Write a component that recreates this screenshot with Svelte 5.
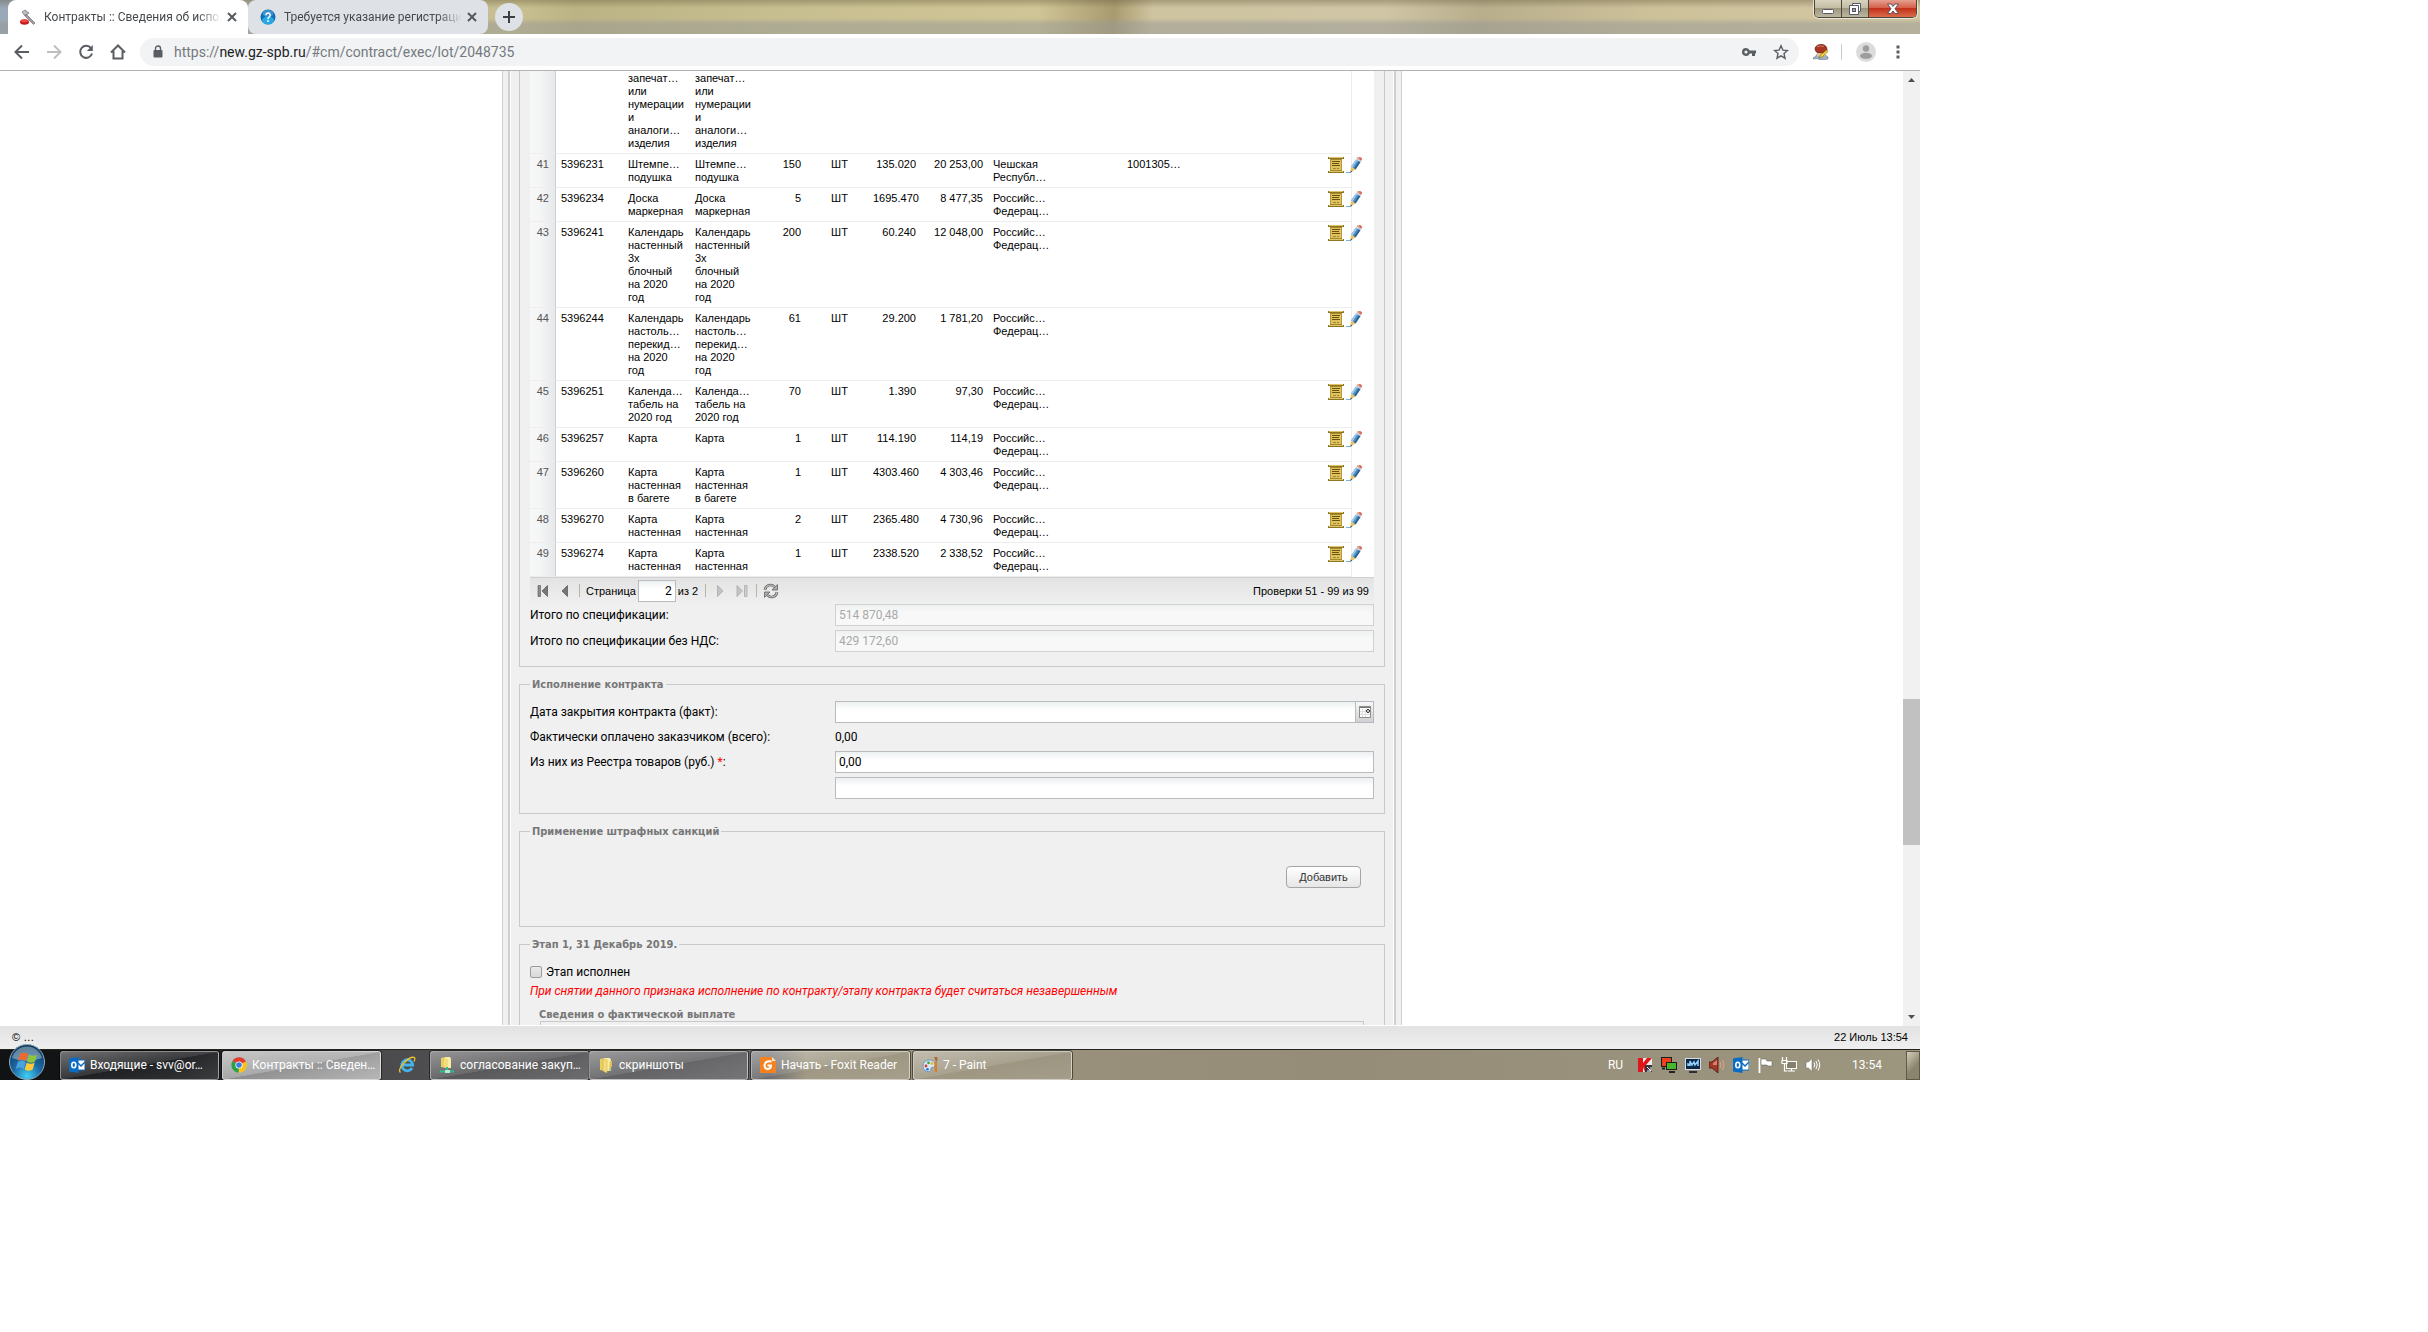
<script lang="ts">
  interface Item {
    no: number;
    id: string;
    name: string;
    qty: string;
    price: string;
    total: string;
    country: string;
    code?: string;
  }

  const russia = 'Российс…\nФедерац…';

  const items: Item[] = [
    { no: 41, id: '5396231', name: 'Штемпе…\nподушка', qty: '150', price: '135.020', total: '20 253,00', country: 'Чешская\nРеспубл…', code: '1001305…' },
    { no: 42, id: '5396234', name: 'Доска\nмаркерная', qty: '5', price: '1695.470', total: '8 477,35', country: russia },
    { no: 43, id: '5396241', name: 'Календарь\nнастенный\n3х\nблочный\nна 2020\nгод', qty: '200', price: '60.240', total: '12 048,00', country: russia },
    { no: 44, id: '5396244', name: 'Календарь\nнастоль…\nперекид…\nна 2020\nгод', qty: '61', price: '29.200', total: '1 781,20', country: russia },
    { no: 45, id: '5396251', name: 'Календа…\nтабель на\n2020 год', qty: '70', price: '1.390', total: '97,30', country: russia },
    { no: 46, id: '5396257', name: 'Карта', qty: '1', price: '114.190', total: '114,19', country: russia },
    { no: 47, id: '5396260', name: 'Карта\nнастенная\nв багете', qty: '1', price: '4303.460', total: '4 303,46', country: russia },
    { no: 48, id: '5396270', name: 'Карта\nнастенная', qty: '2', price: '2365.480', total: '4 730,96', country: russia },
    { no: 49, id: '5396274', name: 'Карта\nнастенная', qty: '1', price: '2338.520', total: '2 338,52', country: russia }
  ];

  const cutName = 'запечат…\nили\nнумерации\nи\nаналоги…\nизделия';

  let page = $state('2');
  let closeDate = $state('');
  let registrySum = $state('0,00');
  let registryNote = $state('');
  let stageDone = $state(false);
</script>

{#snippet outlook()}
  <svg width="16" height="16" viewBox="0 0 16 16">
    <rect x="8" y="3" width="8" height="10" fill="#fff" stroke="#0a6cc4" />
    <path d="M9 6l3 3 4-4" fill="none" stroke="#0a6cc4" stroke-width="1.5" />
    <path d="M0 1.500L9.500 0v16L0 14.500z" fill="#0a6cc4" />
    <ellipse cx="4.800" cy="8" rx="2" ry="2.800" fill="none" stroke="#fff" stroke-width="1.600" />
  </svg>
{/snippet}

{#snippet folder()}
  <svg width="16" height="16" viewBox="0 0 16 16">
    <path d="M2 2l5-1v13l-5-1z" fill="#e8cf62" />
    <path d="M6 1h6l1 2v11H6z" fill="#f8eda4" />
    <path d="M5 2l4 1v13l-4-2z" fill="#f3dc79" stroke="#d1ad3e" stroke-width=".5" />
    <path d="M12 4h2v10h-3z" fill="#e0bf50" />
    <path d="M13 10h1v4h-1z" fill="#3c9ad8" />
  </svg>
{/snippet}

{#snippet rowIcons()}
  <div class="row-icons">
    <button aria-label="Документ">
      <svg width="16" height="16" viewBox="0 0 16 16">
        <path d="M2 2h12v12H2z" fill="#b8983a" />
        <path d="M3 2h10v12H3z" fill="#dfc25c" />
        <path d="M4 4.500h8M4 6.500h7M4 8.500h8" stroke="#6b5410" />
        <path d="M5 11.500h3M9 11.500h2" stroke="#a08638" />
        <rect width="16" height="2" fill="#8f7722" />
        <path d="M1 .5h14" stroke="#dcc56e" />
        <path d="M2 2.500h12" stroke="#a58a2a" />
        <rect y="14" width="16" height="2" fill="#8f7722" />
        <path d="M1 14.500h14" stroke="#dcc56e" />
        <path d="M2 13.500h12" stroke="#a58a2a" />
      </svg>
    </button>
    <button aria-label="Редактировать">
      <svg width="16" height="16" viewBox="0 0 16 16">
        <path d="M0 15.500h5" stroke="#6ab6e6" />
        <path d="M10 2.500l4.500 2.500-5 7.500L5 9.500z" fill="#4f8fc4" />
        <path d="M10 2.500l1.500.8-5 7.500L5 9.500z" fill="#9cc9ea" />
        <path d="M13 4.200l1.500.8-5 7.500-1.300-.9z" fill="#2d5f8f" />
        <path d="M5 9.500l4.500 3L4.500 15.500z" fill="#e6c465" />
        <path d="M4.800 13.500l1.500 1-1.900 1.300z" fill="#3a4c5c" />
        <path d="M10 2.500L11.500.2l4 2.300-1 2.500z" fill="#c9d1d8" />
        <path d="M11 1L12 0h2l1.800 1v2l-.5.800z" fill="#d8675c" />
        <path d="M11 1L12 0h1l.5 2.200z" fill="#f0b488" />
      </svg>
    </button>
  </div>
{/snippet}

<div class="screen">
  <div class="desktop">
    <header>
      <div class="tabstrip">
        <div class="tab active">
          <svg width="16" height="16" viewBox="0 0 16 16">
            <path d="M2 3l3-2 4 3-4 3z" fill="#b9bcc0" stroke="#6f7275" stroke-width=".7" />
            <path d="M6 5l9 9-1.500 1.500L5 7z" fill="#9a9da1" stroke="#5f6265" stroke-width=".6" />
            <ellipse cx="4.500" cy="13" rx="4.500" ry="2.800" fill="#c51a1a" />
            <ellipse cx="4.500" cy="11.800" rx="3.500" ry="1.600" fill="#f04a42" />
          </svg>
          <span class="tab-title">Контракты :: Сведения об испол</span>
          <button class="close" aria-label="Закрыть вкладку">
            <svg width="10" height="10" viewBox="0 0 10 10"><path d="M1 1l8 8M9 1L1 9" stroke="#555a5f" stroke-width="2" /></svg>
          </button>
        </div>
        <div class="tab">
          <svg width="16" height="16" viewBox="0 0 16 16">
            <circle cx="8" cy="8" r="7.500" fill="#0d6fb8" />
            <ellipse cx="8" cy="11.500" rx="6" ry="4" fill="#27a9e6" />
            <ellipse cx="8" cy="4.500" rx="5.500" ry="3.500" fill="#5aa8dc" opacity=".6" />
            <path d="M5.800 6.200a2.200 2.200 0 1 1 3.300 1.900Q8 8.700 8 10" fill="none" stroke="#fff" stroke-width="1.500" />
            <circle cx="8" cy="12" r="1" fill="#fff" />
          </svg>
          <span class="tab-title">Требуется указание регистраци</span>
          <button class="close" aria-label="Закрыть вкладку">
            <svg width="10" height="10" viewBox="0 0 10 10"><path d="M1 1l8 8M9 1L1 9" stroke="#555a5f" stroke-width="2" /></svg>
          </button>
        </div>
        <button class="newtab" aria-label="Новая вкладка">
          <svg width="12" height="12" viewBox="0 0 12 12"><path d="M6 0v12M0 6h12" stroke="#3c4043" stroke-width="2" /></svg>
        </button>
        <div class="winbuttons">
          <button aria-label="Свернуть">
            <svg width="12" height="12" viewBox="0 0 12 12"><rect x=".5" y="6.500" width="11" height="4" rx="1" fill="#fff" stroke="#54586a" /></svg>
          </button>
          <button aria-label="Развернуть">
            <svg width="12" height="12" viewBox="0 0 12 12">
              <path d="M3.500.5h8v8h-2v3h-9v-9h3z" fill="#fff" stroke="#54586a" />
              <path d="M3.500 2.500h6v6" fill="none" stroke="#54586a" />
              <rect x="3.500" y="5.500" width="3" height="3" fill="#a9a48e" stroke="#54586a" />
            </svg>
          </button>
          <button class="win-close" aria-label="Закрыть">
            <svg width="12" height="12" viewBox="0 0 12 12"><path d="M.5 1h3.500l2 2.500L8 1h3.500L8 5.800l3.500 4.700H8L6 8l-2 2.500H.5L4 5.800z" fill="#fff" stroke="#54485a" stroke-width=".9" /></svg>
          </button>
        </div>
      </div>

      <div class="toolbar">
        <button aria-label="Назад">
          <svg width="16" height="16" viewBox="0 0 16 16"><path d="M15 8H2M8 1.500L1.500 8 8 14.500" fill="none" stroke="#5a5e63" stroke-width="2" /></svg>
        </button>
        <button aria-label="Вперёд">
          <svg width="16" height="16" viewBox="0 0 16 16"><path d="M1 8h13M8 1.500L14.500 8 8 14.500" fill="none" stroke="#bdbfc1" stroke-width="2" /></svg>
        </button>
        <button aria-label="Обновить">
          <svg width="16" height="16" viewBox="0 0 16 16">
            <path d="M13 4.200A6 6 0 1 0 14 9.500" fill="none" stroke="#5a5e63" stroke-width="2" />
            <path d="M14.800 1v6H8.800z" fill="#5a5e63" />
          </svg>
        </button>
        <button aria-label="Главная">
          <svg width="16" height="16" viewBox="0 0 16 16"><path d="M1 8.500L8 1.500l7 7M3.500 7v7.500h9V7" fill="none" stroke="#5a5e63" stroke-width="2" /></svg>
        </button>
        <div class="address">
          <svg width="12" height="14" viewBox="0 0 12 14">
            <rect x="1.500" y="5" width="9" height="7.500" rx="1" fill="#5a5e63" />
            <path d="M3.500 5V3.500a2.500 2.500 0 0 1 5 0V5" fill="none" stroke="#5a5e63" stroke-width="1.400" />
          </svg>
          <span class="url">https://<b>new.gz-spb.ru</b>/#cm/contract/exec/lot/2048735</span>
          <svg width="16" height="16" viewBox="0 0 16 16">
            <path fill-rule="evenodd" d="M5 4a4 4 0 1 0 3.700 5.500H11V12h3V9.500h1v-3H8.700A4 4 0 0 0 5 4zm0 2.400a1.600 1.600 0 1 1 0 3.200 1.600 1.600 0 0 1 0-3.200z" fill="#5a5e63" />
          </svg>
          <svg width="16" height="16" viewBox="0 0 16 16">
            <path d="M8 1.800l1.900 4.300 4.600.4-3.500 3.100 1 4.600L8 11.800l-4 2.400 1-4.600-3.500-3.100 4.600-.4z" fill="none" stroke="#5a5e63" stroke-width="1.400" />
          </svg>
        </div>
        <svg class="ext" width="16" height="16" viewBox="0 0 16 16">
          <path d="M3 12l-3 2v1l4-.5 3 1.500h4l4-1v-2l-4-3H4z" fill="#9fb0c4" stroke="#5e6f86" stroke-width=".5" />
          <path d="M4 8h8v4H4z" fill="#e8c29c" />
          <path d="M2 4q2-4 7-3.500Q14 1 14 6q0 2.500-2 3L4 8.500Q2 7 2 4z" fill="#a93622" stroke="#5e170d" stroke-width=".7" />
          <path d="M4 3q3-2 7-.5" stroke="#d98068" fill="none" />
          <path d="M6 14l1.500-3 6-5L15 7.500l-6 5.500z" fill="#f4d335" stroke="#7d6410" stroke-width=".6" />
        </svg>
        <span class="divider"></span>
        <svg width="20" height="20" viewBox="0 0 20 20">
          <circle cx="10" cy="10" r="10" fill="#dcdcdc" />
          <circle cx="10" cy="6.500" r="3.200" fill="#9d9d9d" />
          <ellipse cx="10" cy="13.800" rx="6" ry="3" fill="#9d9d9d" />
        </svg>
        <button class="menu" aria-label="Меню">
          <svg width="4" height="16" viewBox="0 0 4 16"><path d="M0.500 1.500h3v3h-3zM.5 6.500h3v3h-3zM.5 11.500h3v3h-3z" fill="#5a5e63" /></svg>
        </button>
      </div>
    </header>

    <main>
      <div class="page">
        <div class="panel">
          <div class="inner">
            <fieldset class="spec">
              <table>
                <colgroup>
                  <col class="c-no" /><col class="c-text" /><col class="c-text" /><col class="c-text" />
                  <col class="c-qty" /><col class="c-text" /><col class="c-price" /><col class="c-text" />
                  <col class="c-text" /><col class="c-text" /><col class="c-text" /><col /><col class="c-rest" />
                </colgroup>
                <tbody>
                  <tr>
                    <td class="no"></td>
                    <td></td>
                    <td>{cutName}</td>
                    <td>{cutName}</td>
                    <td colspan="7"></td>
                    <td class="actions"></td>
                    <td class="rest"></td>
                  </tr>
                  {#each items as item (item.no)}
                    <tr>
                      <td class="no">{item.no}</td>
                      <td>{item.id}</td>
                      <td>{item.name}</td>
                      <td>{item.name}</td>
                      <td class="right">{item.qty}</td>
                      <td class="center">ШТ</td>
                      <td class="right">{item.price}</td>
                      <td class="right">{item.total}</td>
                      <td>{item.country}</td>
                      <td></td>
                      <td>{item.code ?? ''}</td>
                      <td class="actions">{@render rowIcons()}</td>
                      <td class="rest"></td>
                    </tr>
                  {/each}
                </tbody>
              </table>

              <div class="pager">
                <button aria-label="Первая">
                  <svg width="12" height="12" viewBox="0 0 12 12"><path d="M1 .5h2.500v11H1z" fill="#8b8b8b" stroke="#666" stroke-width=".7" /><path d="M10.500.5v11L5 6z" fill="#777" stroke="#555" stroke-width=".7" /></svg>
                </button>
                <button aria-label="Предыдущая">
                  <svg width="12" height="12" viewBox="0 0 12 12"><path d="M8.500.5v11L3 6z" fill="#777" stroke="#555" stroke-width=".7" /></svg>
                </button>
                <span class="sep"></span>
                <label for="page">Страница</label>
                <input id="page" type="text" bind:value={page} />
                <span class="of">из 2</span>
                <span class="sep"></span>
                <button aria-label="Следующая">
                  <svg width="12" height="12" viewBox="0 0 12 12"><path d="M3.500.5v11L9 6z" fill="#c4c4c4" stroke="#a3a3a3" stroke-width=".7" /></svg>
                </button>
                <button aria-label="Последняя">
                  <svg width="12" height="12" viewBox="0 0 12 12"><path d="M1 .5v11L6.500 6z" fill="#c4c4c4" stroke="#a3a3a3" stroke-width=".7" /><path d="M8.500.5H11v11H8.500z" fill="#d0d0d0" stroke="#a3a3a3" stroke-width=".7" /></svg>
                </button>
                <span class="sep"></span>
                <button aria-label="Обновить список">
                  <svg width="16" height="16" viewBox="0 0 16 16">
                    <path d="M2 7a5.500 5.500 0 0 1 9.500-3.200" fill="none" stroke="#666" stroke-width="2.600" />
                    <path d="M2 7a5.500 5.500 0 0 1 9.500-3.200" fill="none" stroke="#bbb" stroke-width="1.200" />
                    <path d="M14.500 1.500V7H9z" fill="#aaa" stroke="#666" stroke-width=".8" />
                    <path d="M14 9a5.500 5.500 0 0 1-9.500 3.200" fill="none" stroke="#666" stroke-width="2.600" />
                    <path d="M14 9a5.500 5.500 0 0 1-9.500 3.200" fill="none" stroke="#bbb" stroke-width="1.200" />
                    <path d="M1.500 14.500V9H7z" fill="#aaa" stroke="#666" stroke-width=".8" />
                  </svg>
                </button>
                <span class="status">Проверки 51 - 99 из 99</span>
              </div>

              <div class="fields">
                <div class="field">
                  <label for="total">Итого по спецификации:</label>
                  <input id="total" type="text" value="514 870,48" disabled />
                </div>
                <div class="field">
                  <label for="total-novat">Итого по спецификации без НДС:</label>
                  <input id="total-novat" type="text" value="429 172,60" disabled />
                </div>
              </div>
            </fieldset>

            <fieldset>
              <legend>Исполнение контракта</legend>
              <div class="fields">
                <div class="field">
                  <label for="close-date">Дата закрытия контракта (факт):</label>
                  <div class="date">
                    <input id="close-date" type="text" bind:value={closeDate} />
                    <button aria-label="Выбрать дату">
                      <svg width="12" height="12" viewBox="0 0 12 12">
                        <rect x=".5" y=".5" width="11" height="11" fill="#fff" stroke="#8e8e8e" />
                        <path d="M1 1.500h10" stroke="#777" />
                        <path d="M3.500 3v8M6.500 3v8M1 5.500h10M1 8.500h10" stroke="#ddd" />
                        <circle cx="9" cy="5" r="1.500" fill="#fff" stroke="#222" />
                      </svg>
                    </button>
                  </div>
                </div>
                <div class="field plain">
                  <span>Фактически оплачено заказчиком (всего):</span>
                  <output>0,00</output>
                </div>
                <div class="field">
                  <label for="registry">Из них из Реестра товаров (руб.) <em>*</em>:</label>
                  <input id="registry" type="text" bind:value={registrySum} />
                </div>
                <div class="field">
                  <span></span>
                  <input type="text" aria-label="Примечание" bind:value={registryNote} />
                </div>
              </div>
            </fieldset>

            <fieldset class="penalties">
              <legend>Применение штрафных санкций</legend>
              <button class="add">Добавить</button>
            </fieldset>

            <fieldset class="stage">
              <legend>Этап 1, 31 Декабрь 2019.</legend>
              <label class="check">
                <input type="checkbox" bind:checked={stageDone} />
                Этап исполнен
              </label>
              <p class="warning">При снятии данного признака исполнение по контракту/этапу контракта будет считаться незавершенным</p>
              <h3>Сведения о фактической выплате</h3>
              <div class="payments"></div>
            </fieldset>
          </div>
        </div>
      </div>
      <div class="scrollbar">
        <svg width="7" height="4" viewBox="0 0 7 4"><path d="M0 4h7L3.500 0z" fill="#505050" /></svg>
        <div class="track-top"></div>
        <div class="thumb"></div>
        <div class="track-bottom"></div>
        <svg width="7" height="4" viewBox="0 0 7 4"><path d="M0 0h7L3.500 4z" fill="#505050" /></svg>
      </div>
    </main>

    <footer>
      <span>© …</span>
      <time>22 Июль 13:54</time>
    </footer>

    <nav class="taskbar">
      <button class="start" aria-label="Пуск">
        <svg width="36" height="36" viewBox="0 0 36 36">
          <defs>
            <radialGradient id="orb" cx=".5" cy=".9" r=".9">
              <stop offset="0" stop-color="#3fd0f5" />
              <stop offset=".45" stop-color="#1c6aa5" />
              <stop offset="1" stop-color="#0d3557" />
            </radialGradient>
          </defs>
          <circle cx="18" cy="18" r="17.500" fill="url(#orb)" stroke="#8fa9bb" />
          <path d="M3 14a15.500 15.500 0 0 1 30 0Q18 20 3 14z" fill="#fff" opacity=".35" />
          <path d="M11 10q4-3 8 0l-2 7q-4-3-8 0z" fill="#ee6a2c" />
          <path d="M20 10.500q4 2.500 8 0l-2 7q-4 2.500-8 0z" fill="#8cc63f" />
          <path d="M8.700 18q4-3 8 0l-2 7q-4-3-8 0z" fill="#4aa3e0" />
          <path d="M17.700 18.500q4 2.500 8 0l-2 7q-4 2.500-8 0z" fill="#fdc938" />
        </svg>
      </button>
      <button class="task">{@render outlook()}Входящие - svv@or…</button>
      <button class="task current">
        <svg width="16" height="16" viewBox="0 0 16 16">
          <path d="M8 8L1.500 4A7.700 7.700 0 0 1 15 4.500z" fill="#e33b2e" />
          <path d="M8 8L15 4.500A7.700 7.700 0 0 1 7.500 15.700z" fill="#fbc116" />
          <path d="M8 8l-.5 7.700A7.700 7.700 0 0 1 1.500 4z" fill="#28a148" />
          <circle cx="8" cy="8" r="3.600" fill="#fff" />
          <circle cx="8" cy="8" r="2.800" fill="#3f7de0" />
        </svg>
        Контракты :: Сведен…
      </button>
      <button class="ie" aria-label="Internet Explorer">
        <svg width="18" height="18" viewBox="0 0 18 18">
          <path d="M14 12a5.500 5.500 0 1 1 .7-3H4.500" fill="none" stroke="#45b4ec" stroke-width="2.800" />
          <path d="M2.500 16.500Q-.5 14 6 7t10.500-5.500Q17.500 2.500 16 5.500" fill="none" stroke="#f0c22c" stroke-width="1.300" />
        </svg>
      </button>
      <button class="task joined">
        <svg width="16" height="18" viewBox="0 0 16 18">
          <path d="M2 2l5-1v11l-5-1z" fill="#e8cf62" />
          <path d="M6 1h5l1 2v9H6z" fill="#f8eda4" />
          <path d="M5 2l4 1v10l-4-2z" fill="#f3dc79" />
          <path d="M8 11v4M1 15.500h14" stroke="#2ebf8f" stroke-width="2" />
          <rect x="6" y="14" width="5" height="3" fill="#b7e8d8" />
        </svg>
        согласование закуп…
      </button>
      <button class="task">{@render folder()}скриншоты</button>
      <button class="task">
        <svg width="16" height="16" viewBox="0 0 16 16">
          <path d="M0 0h12l4 4v12H0z" fill="#f58220" />
          <path d="M12 0l4 4h-4z" fill="#fff" opacity=".8" />
          <path d="M11.500 4.500q-6-1-7 3.500 0 4 3.500 4 3-.3 3-3.500H7.500" fill="none" stroke="#fff" stroke-width="2" />
        </svg>
        Начать - Foxit Reader
      </button>
      <button class="task">
        <svg width="16" height="16" viewBox="0 0 16 16">
          <path d="M1 9q0-5 6-6 6 0 6 5 0 3-3 2.500-2 .5-1 2.500-1 2-4 1.500Q1 13.500 1 9z" fill="#d5e9f5" stroke="#5b92b8" stroke-width=".8" />
          <circle cx="4" cy="9" r="1.400" fill="#d33" />
          <circle cx="6.500" cy="5.800" r="1.400" fill="#3aa34a" />
          <circle cx="10" cy="6.500" r="1.400" fill="#f0b418" />
          <circle cx="5.500" cy="12.200" r="1.300" fill="#2d6fd0" />
          <path d="M12.800 5h2.200v10h-2.200z" fill="#e07b1f" />
          <path d="M12 0h3.500v3.500L14 5z" fill="#a96c3b" />
        </svg>
        7 - Paint
      </button>

      <div class="tray">
        <span class="lang">RU</span>
        <svg width="16" height="16" viewBox="0 0 16 16">
          <rect x="1" y="1" width="14" height="14" fill="#f3e9e2" />
          <path d="M1 1h5v5l4-5h5L9 8l4 7H8L6 10v5H1z" fill="#e0161b" />
          <path d="M8 8h7v7H8z" fill="#33353a" />
          <path d="M10 10l4 4m0-4v4h-4" stroke="#fff" fill="none" />
        </svg>
        <svg width="16" height="16" viewBox="0 0 16 16">
          <rect x=".5" y=".5" width="10" height="9" fill="#f0401c" stroke="#1c1c1c" />
          <rect x="5.500" y="5.500" width="10" height="7" fill="#46b72c" stroke="#1c1c1c" />
          <path d="M8 15h6M1 11.500h3" stroke="#222" stroke-width="2" />
        </svg>
        <svg width="16" height="16" viewBox="0 0 16 16">
          <rect x=".5" y="1.500" width="15" height="11" fill="#0c2746" stroke="#d5dde6" />
          <path d="M3 9V7l2 1V4l2 4 2-3 1 3 3-4v5" fill="none" stroke="#8fd2ff" stroke-width="1.500" />
          <path d="M4 15h8" stroke="#2b2f36" stroke-width="2" />
        </svg>
        <svg width="16" height="16" viewBox="0 0 16 16">
          <path d="M0 5h3l6-5v16l-6-5H0z" fill="#a33a28" stroke="#4d150c" stroke-width=".8" />
          <path d="M4 6l4-3v5H4z" fill="#d9806c" />
          <path d="M11 5q2 3 0 6M13.500 3q3 5 0 10" fill="none" stroke="#e8a088" />
        </svg>
        {@render outlook()}
        <svg width="16" height="16" viewBox="0 0 16 16">
          <path d="M2.500 1v15" stroke="#fff" stroke-width="1.800" />
          <path d="M4 2h5l1 2h5v5h-4l-1-1H4z" fill="#fff" stroke="#555" stroke-width=".5" />
        </svg>
        <svg width="16" height="16" viewBox="0 0 16 16">
          <rect x="5.500" y="4.500" width="10" height="7" fill="#857f6c" stroke="#fff" />
          <path d="M7 14h7M10.500 12v2M1.500 0v3M5.500 0v3M1 3.500h5v3H1zM3.500 6v8h3" fill="none" stroke="#fff" stroke-width="1.200" />
        </svg>
        <svg width="16" height="16" viewBox="0 0 16 16">
          <path d="M1 5h2.500L7 1.500v13L3.500 11H1z" fill="#fff" stroke="#666" stroke-width=".5" />
          <path d="M9 5.500q1.500 2.500 0 5M11 4q2.500 4 0 8M13 2.500q3.500 5.500 0 11" fill="none" stroke="#fff" />
        </svg>
      </div>
      <time class="clock">13:54</time>
      <span class="show-desktop"></span>
    </nav>
  </div>
</div>

<style>
  :global(body) {
    margin: 0;
    background: #fff;
  }

  /* the captured desktop fills 480 of every 607 units of the width */
  .screen {
    display: grid;
    grid-template-columns: minmax(0, 480fr) minmax(0, 127fr);
    font-family: "Liberation Sans", Arial, sans-serif;
    font-size: 11px;
    line-height: 13px;
    color: #000;
  }

  .desktop {
    display: flex;
    flex-direction: column;
    overflow: hidden;
  }

  button {
    display: flex;
    align-items: center;
    justify-content: center;
    margin: 0;
    padding: 0;
    border: 0;
    background: none;
    font: inherit;
    color: inherit;
  }

  svg {
    display: block;
    flex: none;
  }

  .tabstrip {
    display: flex;
    align-items: center;
    height: 34px;
    padding: 0 3px 0 8px;
    box-sizing: border-box;
    background:
      linear-gradient(180deg, rgba(90, 80, 50, 0.35) 0, rgba(90, 80, 50, 0) 8px, rgba(120, 125, 130, 0) 18px, rgba(150, 152, 150, 0.5) 24px),
      linear-gradient(95deg, #9aa9b8 0, #c9c091 27%, #bcb384 30%, #c7be90 40%, #d0c596 54%, #a99b70 58%, #cfc4a0 60%, #d0c5a5 72%, #b9ae8c 77%, #cdc19a 86%, #d2c8a2 100%);
  }

  .tab {
    display: flex;
    align-items: center;
    width: 240px;
    height: 34px;
    padding: 0 11px 0 12px;
    box-sizing: border-box;
    border-radius: 8px;
    background: #dee1e6;
  }

  .tab.active {
    border-radius: 8px 8px 0 0;
    background: #fff;
  }

  .tab-title {
    flex: 1;
    margin: 0 2px 0 8px;
    overflow: hidden;
    white-space: nowrap;
    font-family: Roboto, sans-serif;
    font-size: 12px;
    line-height: 18px;
    color: #45494d;
    mask-image: linear-gradient(90deg, #000 85%, transparent 98%);
  }

  .newtab {
    width: 28px;
    height: 28px;
    margin-left: 7px;
    border-radius: 50%;
    background: #dee1e6;
  }

  .winbuttons {
    display: flex;
    align-self: flex-start;
    height: 17px;
    margin-left: auto;
    border: 1px solid #4a463c;
    border-top: 0;
    border-radius: 0 0 5px 5px;
    box-shadow: 0 0 0 1px rgba(255, 255, 255, 0.6);
    overflow: hidden;
  }

  .winbuttons button {
    width: 27px;
    border-right: 1px solid #4a463c;
    background: linear-gradient(#d8d3bd 0, #c3bda4 45%, #9d977f 50%, #bdb7a0 100%);
  }

  .winbuttons .win-close {
    width: 47px;
    border-right: 0;
    background: linear-gradient(#e5a08f 0, #d4614b 45%, #c2311a 50%, #dd6b4b 100%);
  }

  .toolbar {
    display: flex;
    align-items: center;
    gap: 16px;
    height: 36px;
    padding: 0 20px 0 14px;
    border-bottom: 1px solid #b3b1b4;
    background: #fff;
  }

  .address {
    display: flex;
    flex: 1;
    align-items: center;
    gap: 16px;
    height: 28px;
    padding: 0 10px 0 12px;
    margin-right: -2px;
    margin-left: -2px;
    border-radius: 14px;
    background: #f1f3f4;
  }

  .url {
    flex: 1;
    margin-left: -6px;
    font-family: Roboto, sans-serif;
    font-size: 14px;
    line-height: 20px;
    color: #75797e;
  }

  .url b {
    font-weight: 400;
    color: #202124;
  }

  .divider {
    width: 1px;
    height: 16px;
    margin: 0 -2px 0 -4px;
    background: #c8c8c8;
  }

  .menu {
    margin-left: 4px;
  }

  main {
    display: flex;
  }

  .page {
    flex: 1;
    display: flex;
    justify-content: center;
    padding-left: 1px;
    border-bottom: 1px solid #fff;
  }

  .panel {
    flex: 0 1 900px;
    box-sizing: border-box;
    padding: 0 5px;
    border: solid #d0d0d0;
    border-width: 0 1px;
    background: #f0f0f0;
  }

  .inner {
    padding: 0 9px;
    border: solid #cfcfcf;
    border-width: 0 2px;
    box-shadow: inset 1px 0 #fff, inset -1px 0 #fff;
  }

  fieldset {
    min-width: 0;
    margin: 0 0 10px;
    padding: 9px 10px 14px;
    border: 1px solid #c8c9ca;
    font-family: Roboto, Tahoma, sans-serif;
    font-size: 12px;
    line-height: 16px;
  }

  legend {
    padding: 0 2px;
    font-family: "DejaVu Sans Condensed", Tahoma, sans-serif;
    font-size: 11px;
    line-height: 15px;
    font-weight: 700;
    color: #777;
  }

  .spec {
    padding-top: 0;
    border-top: 0;
  }

  table {
    width: 100%;
    table-layout: fixed;
    border-spacing: 0;
    border-bottom: 1px solid #d0d0d0;
    background: #fff;
    font-family: "Liberation Sans", Arial, sans-serif;
    font-size: 11px;
    line-height: 13px;
  }

  .c-no {
    width: 26px;
  }

  .c-text {
    width: 67px;
  }

  .c-qty {
    width: 49px;
  }

  .c-price {
    width: 48px;
  }

  .c-rest {
    width: 22px;
  }

  td {
    padding: 4px 0 3px 5px;
    border-bottom: 1px solid #ededed;
    vertical-align: top;
    white-space: pre-line;
  }

  tr:first-child td {
    padding-top: 1px;
  }

  td.no {
    padding: 4px 6px 3px 0;
    border-right: 1px solid #d0d0d0;
    background: linear-gradient(90deg, #f8f8f8 0, #f4f5f6 40%, #e6e8ea 100%);
    text-align: right;
    color: #555;
  }

  td.right {
    padding-right: 5px;
    padding-left: 0;
    text-align: right;
  }

  td.center {
    padding-right: 5px;
    text-align: center;
  }

  td.actions {
    padding: 3px 0 0;
    border-right: 1px solid #ededed;
  }

  td.rest {
    padding: 0;
    border-bottom: 0;
  }

  /* the pencil hangs over the edge of its column */
  .row-icons {
    display: flex;
    justify-content: flex-end;
    gap: 2px;
    margin-right: -11px;
  }

  .pager {
    display: flex;
    align-items: center;
    height: 25px;
    padding: 0 5px;
    margin-bottom: 1px;
    background: linear-gradient(#e3e3e3, #efefef);
    font-family: "Liberation Sans", Arial, sans-serif;
    font-size: 11px;
  }

  .pager button {
    width: 16px;
    height: 16px;
    margin-right: 6px;
  }

  .pager .sep {
    width: 1px;
    height: 13px;
    margin: 0 6px 0 0;
    background: #b5b5a8;
  }

  .pager label {
    margin-right: 2px;
  }

  .pager input {
    width: 38px;
    height: 20px;
    padding: 0 4px;
    font-family: "Liberation Sans", Arial, sans-serif;
    text-align: right;
  }

  .pager .of {
    margin: 0 7px 0 2px;
  }

  .pager .status {
    margin-left: auto;
  }

  .fields {
    display: flex;
    flex-direction: column;
    gap: 4px;
  }

  .field {
    display: grid;
    grid-template-columns: 305px minmax(0, 1fr);
    align-items: center;
    min-height: 22px;
  }

  .field.plain {
    min-height: 20px;
  }

  .field em {
    font-style: normal;
    color: red;
  }

  input[type="text"] {
    height: 22px;
    box-sizing: border-box;
    margin: 0;
    padding: 0 3px;
    border: 1px solid #b9bbbd;
    border-radius: 0;
    background: linear-gradient(#ecf0f1 0, #fff 8px);
    font-family: Roboto, Tahoma, sans-serif;
    font-size: 12px;
    color: #000;
  }

  input[type="text"]:disabled {
    border-color: #cfd0d1;
    background: linear-gradient(#eff1f1 0, #f8f8f8 8px);
    color: #a8a8a8;
  }

  .date {
    display: flex;
  }

  .date input {
    flex: 1;
    min-width: 0;
  }

  .date button {
    width: 18px;
    height: 22px;
    box-sizing: border-box;
    border: solid #b5b8c4;
    border-width: 1px 1px 1px 0;
    background: linear-gradient(#f8f8f8, #d0d0d0);
  }

  .penalties {
    padding: 27px 10px 38px;
  }

  .add {
    width: 75px;
    height: 22px;
    margin: 0 13px 0 auto;
    border: 1px solid #a5a5a5;
    border-radius: 4px;
    background: linear-gradient(#fff, #e6e6e6);
    font-family: "Liberation Sans", Arial, sans-serif;
    font-size: 11px;
    color: #333;
  }

  .stage {
    margin: 0;
    padding: 12px 10px 0;
    border-bottom: 0;
  }

  .check {
    display: flex;
    align-items: center;
    gap: 4px;
  }

  .check input {
    appearance: none;
    width: 12px;
    height: 12px;
    margin: 0;
    box-sizing: border-box;
    border: 1px solid #9b9b9b;
    border-radius: 2px;
    background: linear-gradient(#e9e9e9, #d9d9d9);
  }

  .warning {
    margin: 3px 0 8px;
    font-style: italic;
    white-space: nowrap;
    color: red;
  }

  h3 {
    margin: 0 0 0 9px;
    font-family: "DejaVu Sans Condensed", Tahoma, sans-serif;
    font-size: 11px;
    line-height: 15px;
    font-weight: 700;
    color: #777;
  }

  .payments {
    height: 3px;
    margin: -1px 10px 0;
    border: 1px solid #c8c9ca;
    border-bottom: 0;
  }

  .scrollbar {
    display: flex;
    flex-direction: column;
    align-items: center;
    width: 17px;
    padding: 7px 0;
    box-sizing: border-box;
    background: #f1f1f1;
  }

  .thumb {
    flex: 146;
    align-self: stretch;
    background: #c1c1c1;
  }

  .track-top {
    flex: 615;
  }

  .track-bottom {
    flex: 169;
  }

  footer {
    display: flex;
    align-items: center;
    justify-content: space-between;
    height: 23px;
    padding: 0 12px;
    background: linear-gradient(#e2e2e2, #efefef);
  }

  .taskbar {
    display: flex;
    align-items: center;
    height: 30px;
    border-top: 1px solid #25231e;
    background: linear-gradient(90deg, #111214 0, #17181b 9%, #4b4b4d 20%, #646466 40%, #9b937d 42%, #958d78 70%, #9d967f 100%);
    font-family: Roboto, sans-serif;
    font-size: 12px;
    color: #fff;
  }

  .start {
    width: 36px;
    margin: -6px 15px 0 9px;
  }

  .task {
    justify-content: flex-start;
    gap: 5px;
    flex: 0 1 159px;
    min-width: 0;
    height: 29px;
    padding: 0 8px;
    margin-right: 3px;
    box-sizing: border-box;
    border: 1px solid rgba(255, 255, 255, 0.45);
    border-radius: 3px;
    box-shadow: 0 0 0 1px rgba(0, 0, 0, 0.5);
    background: linear-gradient(170deg, rgba(255, 255, 255, 0.4) 0, rgba(255, 255, 255, 0.15) 50%, rgba(255, 255, 255, 0.05) 51%, rgba(255, 255, 255, 0.12) 100%);
    white-space: nowrap;
    overflow: hidden;
  }

  .task.current {
    background: linear-gradient(170deg, rgba(255, 255, 255, 0.75) 0, rgba(255, 255, 255, 0.6) 50%, rgba(255, 255, 255, 0.48) 51%, rgba(255, 255, 255, 0.6) 100%);
  }

  .task.joined {
    margin-right: 0;
  }

  .ie {
    width: 46px;
    height: 29px;
  }

  .tray {
    display: flex;
    align-items: center;
    gap: 8px;
    margin-left: auto;
  }

  .lang {
    margin-right: 6px;
  }

  .clock {
    margin: 0 24px 0 31px;
  }

  .show-desktop {
    width: 14px;
    height: 29px;
    box-sizing: border-box;
    border: 1px solid #5d5848;
    background: linear-gradient(135deg, #d3ceba, #8b836b 60%);
  }
</style>
